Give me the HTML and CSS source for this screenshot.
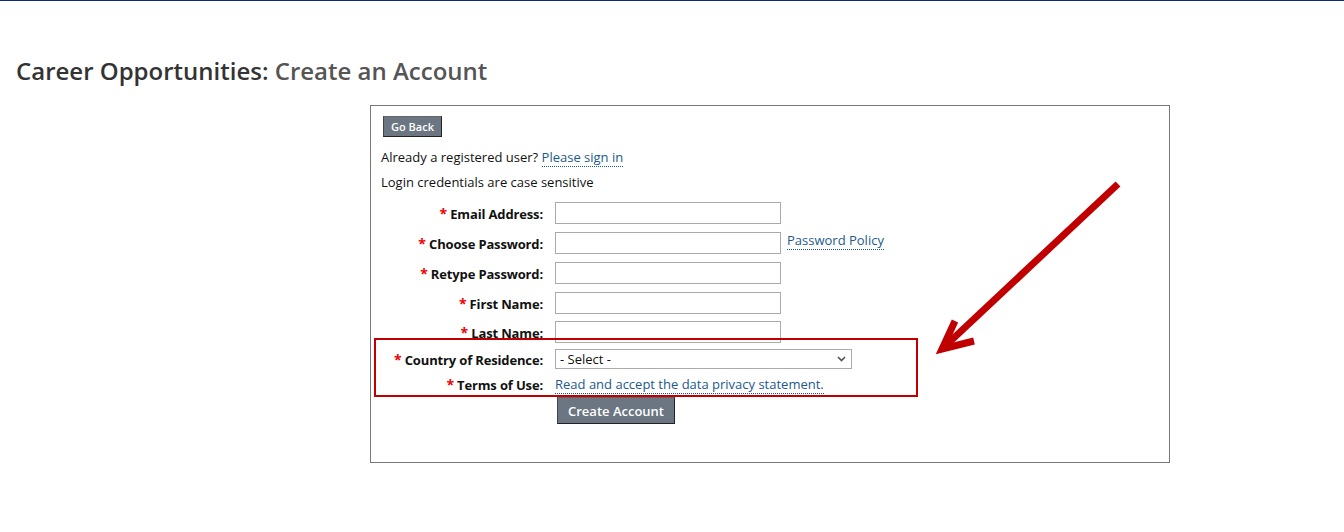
FILE: index.html
```html
<!DOCTYPE html>
<html lang="en">
<head>
    <meta charset="UTF-8">
    <title>Career Opportunities: Create an Account</title>
    <link rel="stylesheet" href="styles.css">
</head>
<body>
    <div class="topbar"></div>

    <h1 class="page-title">Career Opportunities: <span class="sub">Create an Account</span></h1>

    <div class="account-box">
        <button class="btn btn-small">Go Back</button>
        <p class="line first">Already a registered user? <a href="#">Please sign in</a></p>
        <p class="line">Login credentials are case sensitive</p>

        <form class="account-form" action="#" method="post">
            <div class="form-row">
                <label for="email"><span class="req">*</span> Email Address:</label>
                <input type="text" id="email">
            </div>
            <div class="form-row">
                <label for="pass1"><span class="req">*</span> Choose Password:</label>
                <input type="password" id="pass1">
                <a href="#" class="policy">Password Policy</a>
            </div>
            <div class="form-row">
                <label for="pass2"><span class="req">*</span> Retype Password:</label>
                <input type="password" id="pass2">
            </div>
            <div class="form-row">
                <label for="fname"><span class="req">*</span> First Name:</label>
                <input type="text" id="fname">
            </div>
            <div class="form-row short">
                <label for="lname"><span class="req">*</span> Last Name:</label>
                <input type="text" id="lname">
            </div>
            <div class="form-row shorter">
                <label for="country"><span class="req">*</span> Country of Residence:</label>
                <div class="select-box" id="country">
                    <span>- Select -</span>
                    <svg width="9" height="6" viewBox="0 0 9 6"><path d="M1 1 L4.5 4.5 L8 1" fill="none" stroke="#555" stroke-width="1.7"/></svg>
                </div>
            </div>
            <div class="form-row terms">
                <label><span class="req">*</span> Terms of Use:</label>
                <a href="#">Read and accept the data privacy statement.</a>
            </div>
            <div class="form-row submit">
                <span></span>
                <button type="button" class="btn btn-big">Create Account</button>
            </div>
        </form>

        <div class="highlight"></div>

        <svg class="arrow" width="200" height="190" viewBox="0 0 200 190">
            <line x1="188" y1="9" x2="12" y2="174" stroke="#c00000" stroke-width="7"/>
            <polyline points="25,146 12,174 44,166" fill="none" stroke="#c00000" stroke-width="7" stroke-linecap="butt" stroke-linejoin="miter" stroke-miterlimit="8"/>
        </svg>
    </div>
</body>
</html>
```

FILE: styles.css
```css
body {
    margin: 0;
    padding: 0;
    font-family: "Open Sans", Arial, sans-serif;
    font-size: 13px;
    color: #111;
    background: #fff;
}

.topbar {
    height: 1px;
    background-color: #0d2a80;
}

.page-title {
    margin: 54px 0 0 16px;
    font-size: 24px;
    font-weight: 600;
    color: #333;
    line-height: 32px;
}

.page-title .sub {
    color: #555;
}

.account-box {
    position: relative;
    width: 788px;
    height: 346px;
    margin: 18px 0 0 370px;
    padding: 10px 0 0 10px;
    border: 1px solid #777;
}

.btn {
    font-family: "Open Sans", Arial, sans-serif;
    background-color: #6b7682;
    color: #fff;
    border: 1px solid #222;
    border-top-color: #666;
    border-left-color: #444;
    cursor: pointer;
}

.btn-small {
    margin-left: 2px;
    height: 21px;
    padding: 0 7px;
    font-size: 11px;
    font-weight: 600;
}

.btn-big {
    margin-left: 2px;
    height: 27px;
    padding: 0 10px;
    font-size: 13px;
    font-weight: 600;
}

.line {
    margin: 0;
    line-height: 18px;
}

.line.first {
    margin-top: 11px;
}

.line + .line {
    margin-top: 7px;
}

a {
    color: #1c5a8c;
    text-decoration: none;
    border-bottom: 1px dotted #1c5a8c;
}

.account-form {
    margin-top: 7px;
}

.form-row {
    display: flex;
    align-items: center;
    height: 30px;
}

.form-row.short {
    height: 28px;
}

.form-row.shorter {
    height: 26px;
}

.form-row.terms {
    height: 24px;
}

.form-row.submit {
    height: 30px;
    align-items: flex-start;
    padding-top: 1px;
}

.form-row.submit span {
    width: 174px;
}

.form-row label {
    width: 162px;
    padding-right: 12px;
    text-align: right;
    font-weight: 700;
    letter-spacing: -0.15px;
}

.req {
    color: #e00;
    font-size: 14px;
}

.form-row input {
    box-sizing: border-box;
    width: 226px;
    height: 22px;
    margin: 0;
    border: 1px solid #aaa;
    font-family: "Open Sans", Arial, sans-serif;
}

.policy {
    margin-left: 6px;
    margin-bottom: 6px;
}

.select-box {
    box-sizing: border-box;
    width: 297px;
    height: 20px;
    border: 1px solid #aaa;
    display: flex;
    align-items: center;
    justify-content: space-between;
    padding: 0 5px 0 4px;
}

.highlight {
    position: absolute;
    left: 3px;
    top: 232px;
    width: 540px;
    height: 55px;
    border: 2px solid #c00000;
}

.arrow {
    position: absolute;
    left: 559px;
    top: 69px;
}
```
